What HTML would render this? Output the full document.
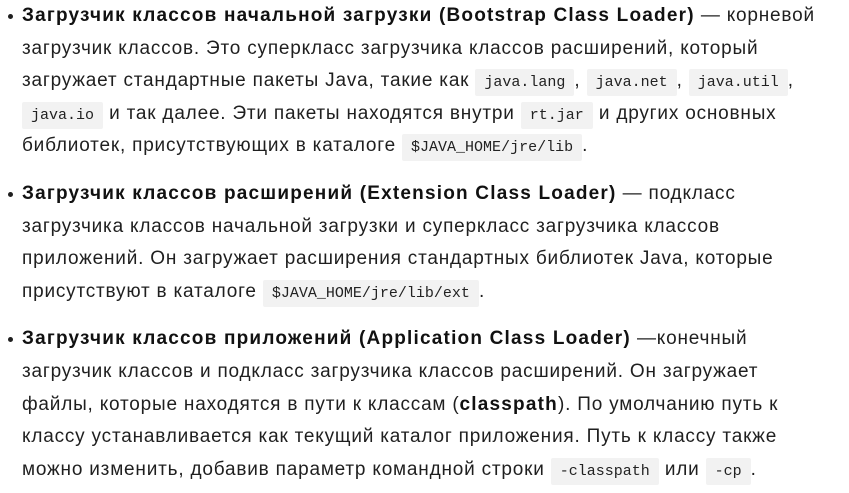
<!DOCTYPE html>
<html><head><meta charset="utf-8"><style>
html,body{margin:0;padding:0;background:#fff;width:849px;height:493px;overflow:hidden}
body{font-family:"Liberation Sans","DejaVu Sans",sans-serif;font-size:19px;color:#1f1f1f;letter-spacing:0.8px}
ul{margin:0;padding:0 0 0 22px;list-style:none}
li{position:relative;line-height:32.6px;margin:0 0 15px 0;white-space:nowrap}
li:before{content:"";position:absolute;left:-14px;top:14px;width:5px;height:5px;border-radius:50%;background:#1f1f1f}
b{font-weight:bold;color:#111;letter-spacing:1.2px}
code{font-family:"Liberation Mono",monospace;font-size:15px;letter-spacing:0;background:#f2f2f2;padding:5px 9px;border-radius:2px;color:#222;line-height:1}
</style></head><body>
<ul>
<li><b>Загрузчик классов начальной загрузки (Bootstrap Class Loader)</b> — корневой<br>загрузчик классов. Это суперкласс загрузчика классов расширений, который<br>загружает стандартные пакеты Java, такие как <code>java.lang</code>, <code>java.net</code>, <code>java.util</code>,<br><code>java.io</code> и так далее. Эти пакеты находятся внутри <code>rt.jar</code> и других основных<br>библиотек, присутствующих в каталоге <code>$JAVA_HOME/jre/lib</code>.</li>
<li><b>Загрузчик классов расширений (Extension Class Loader)</b> — подкласс<br>загрузчика классов начальной загрузки и суперкласс загрузчика классов<br>приложений. Он загружает расширения стандартных библиотек Java, которые<br>присутствуют в каталоге <code>$JAVA_HOME/jre/lib/ext</code>.</li>
<li><b>Загрузчик классов приложений (Application Class Loader)</b> —конечный<br>загрузчик классов и подкласс загрузчика классов расширений. Он загружает<br>файлы, которые находятся в пути к классам (<b>classpath</b>). По умолчанию путь к<br>классу устанавливается как текущий каталог приложения. Путь к классу также<br>можно изменить, добавив параметр командной строки <code>-classpath</code> или <code>-cp</code>.</li>
</ul>
</body></html>
